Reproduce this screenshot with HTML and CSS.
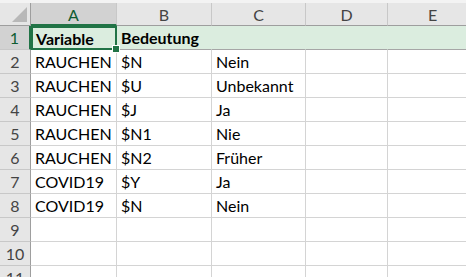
FILE: index.html
```html
<!DOCTYPE html>
<html lang="de">
<head>
    <meta charset="UTF-8">
    <title>Tabelle</title>
    <link rel="stylesheet" href="styles.css">
</head>
<body>
    <div class="top-strip"></div>
    <div class="sheet">
        <div class="hd corner"><span class="tri"></span></div>
        <div class="hd col active">A</div>
        <div class="hd col">B</div>
        <div class="hd col">C</div>
        <div class="hd col">D</div>
        <div class="hd col">E</div>

        <div class="hd row active">1</div>
        <div class="cell title selected">Variable<span class="handle"></span></div>
        <div class="cell title">Bedeutung</div>
        <div class="cell title"></div>
        <div class="cell title"></div>
        <div class="cell title"></div>

        <div class="hd row">2</div>
        <div class="cell">RAUCHEN</div><div class="cell">$N</div><div class="cell">Nein</div><div class="cell"></div><div class="cell"></div>
        <div class="hd row">3</div>
        <div class="cell">RAUCHEN</div><div class="cell">$U</div><div class="cell">Unbekannt</div><div class="cell"></div><div class="cell"></div>
        <div class="hd row">4</div>
        <div class="cell">RAUCHEN</div><div class="cell">$J</div><div class="cell">Ja</div><div class="cell"></div><div class="cell"></div>
        <div class="hd row">5</div>
        <div class="cell">RAUCHEN</div><div class="cell">$N1</div><div class="cell">Nie</div><div class="cell"></div><div class="cell"></div>
        <div class="hd row">6</div>
        <div class="cell">RAUCHEN</div><div class="cell">$N2</div><div class="cell">Früher</div><div class="cell"></div><div class="cell"></div>
        <div class="hd row">7</div>
        <div class="cell">COVID19</div><div class="cell">$Y</div><div class="cell">Ja</div><div class="cell"></div><div class="cell"></div>
        <div class="hd row">8</div>
        <div class="cell">COVID19</div><div class="cell">$N</div><div class="cell">Nein</div><div class="cell"></div><div class="cell"></div>
        <div class="hd row">9</div>
        <div class="cell"></div><div class="cell"></div><div class="cell"></div><div class="cell"></div><div class="cell"></div>
        <div class="hd row">10</div>
        <div class="cell"></div><div class="cell"></div><div class="cell"></div><div class="cell"></div><div class="cell"></div>
        <div class="hd row">11</div>
        <div class="cell"></div><div class="cell"></div><div class="cell"></div><div class="cell"></div><div class="cell"></div>
    </div>
</body>
</html>
```

FILE: styles.css
```css
body {
    margin: 0;
    background-color: #ffffff;
    font-family: Lato, "Liberation Sans", sans-serif;
    color: #000000;
    overflow: hidden;
}

.top-strip {
    height: 3px;
    background-color: #f3f3f3;
}

.sheet {
    display: grid;
    grid-template-columns: 31px 86px 95px 94px 82px 90px;
    grid-template-rows: 23px repeat(11, 24px);
}

.hd {
    background-color: #e6e6e6;
    color: #444444;
    font-size: 16px;
    display: flex;
    align-items: center;
    justify-content: center;
    box-sizing: border-box;
    border-right: 1px solid #c8c8c8;
    border-bottom: 1px solid #c8c8c8;
}

.hd.col {
    border-bottom: 1px solid #9e9e9e;
    padding-top: 1px;
}

.hd.row {
    border-right: 1px solid #9e9e9e;
}

.hd.active {
    background-color: #d2d2d2;
    color: #0f5c32;
}

.hd.col.active {
    border-bottom: 2px solid #217346;
}

.hd.row.active {
    border-right: 2px solid #217346;
}

.corner {
    position: relative;
    border-bottom: 1px solid #9e9e9e;
    border-right: 1px solid #9e9e9e;
}

.tri {
    position: absolute;
    right: 3px;
    bottom: 3px;
    width: 0;
    height: 0;
    border-left: 15px solid transparent;
    border-bottom: 15px solid #b8b8b8;
}

.cell {
    font-size: 16px;
    padding: 0 4px;
    display: flex;
    align-items: center;
    white-space: nowrap;
    box-sizing: border-box;
    border-right: 1px solid #d4d4d4;
    border-bottom: 1px solid #d4d4d4;
}

.cell.title {
    background-color: #dbeddf;
    font-weight: bold;
    border-right-color: #dbeddf;
    border-bottom: 1px solid #a6a6a6;
}

.cell.selected {
    position: relative;
    border: 2px solid #217346;
    padding-left: 3px;
}

.handle {
    position: absolute;
    right: -5px;
    bottom: -5px;
    width: 6px;
    height: 6px;
    background-color: #217346;
    border: 1px solid #ffffff;
}
```
